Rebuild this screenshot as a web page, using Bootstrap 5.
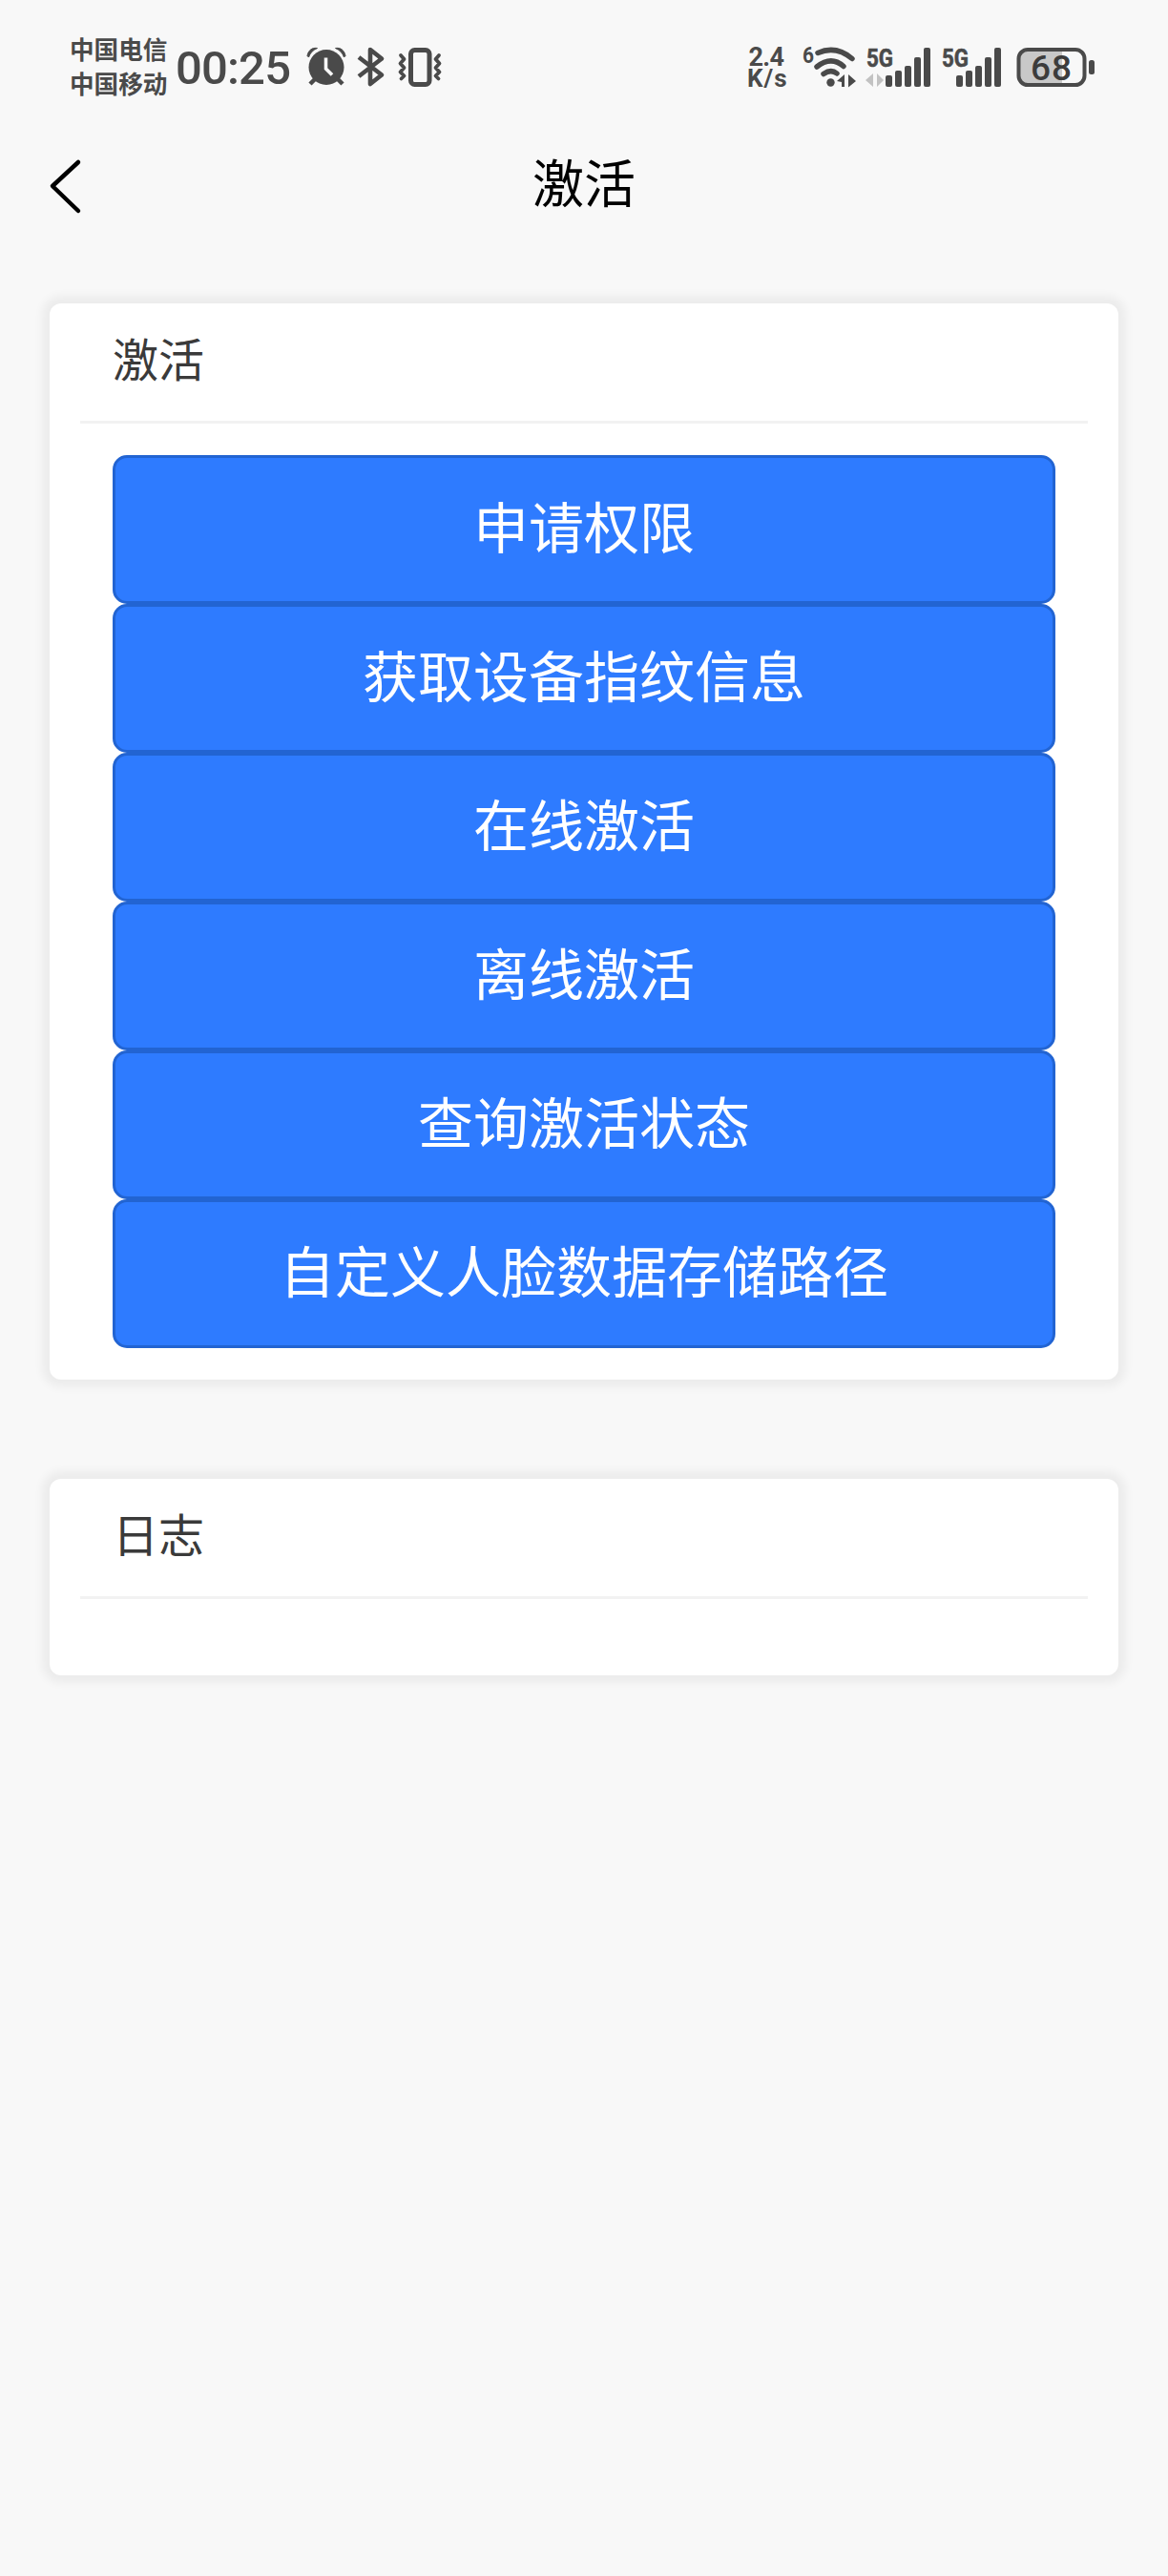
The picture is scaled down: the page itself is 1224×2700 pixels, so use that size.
<!DOCTYPE html>
<html lang="zh-CN">
<head>
<meta charset="utf-8">
<meta name="viewport" content="width=device-width, initial-scale=1">
<title>激活</title>
<link href="https://cdn.jsdelivr.net/npm/bootstrap@5.3.0/dist/css/bootstrap.min.css" rel="stylesheet">
<style>
  body { background: #f8f8f8; font-family: "Noto Sans CJK SC", sans-serif; min-height: 2700px; color: #333; }
  .status-bar { height: 140px; padding: 0 77px 0 73px; color: #4a4a4a; }
  .status-bar svg { height: 44px; flex: none; overflow: visible; }
  .carriers { width: 102px; font-size: 25.6px; line-height: 36px; font-weight: 700; white-space: nowrap; padding-bottom: 2px; }
  .clock { width: 120px; margin-left: 10px; }
  .ic-alarm { width: 40px; margin-left: 17px; }
  .ic-bt { width: 28px; margin-left: 13px; }
  .ic-vib { width: 46px; margin-left: 14px; }
  .ic-speed { width: 42px; }
  .ic-wifi { width: 56px; margin-left: 16px; }
  .ic-sig1 { width: 68px; margin-left: 10px; }
  .ic-sig2 { width: 62px; margin-left: 12px; }
  .ic-batt { width: 82px; margin-left: 16px; }
  svg text { font-family: Roboto, sans-serif; font-weight: 700; fill: #4a4a4a; }
  .title-bar { height: 110px; padding: 0 50px; color: #000; }
  .title-bar h1 { font-size: 54px; line-height: 100px; height: 110px; font-weight: 400; }
  .side-slot { width: 60px; }
  .content-area { padding: 68px 52px 0; }
  .panel { border: 0; border-radius: 12px; background: #fff; box-shadow: 0 0 10px 8px rgba(0,0,0,.05); }
  .panel + .panel { margin-top: 104px; }
  .panel-title { margin: 0 32px; padding: 0 34px; height: 126px; border-bottom: 3px solid #f2f2f2; font-size: 48px; line-height: 113px; font-weight: 400; color: #3a3a3a; }
  .actions { padding: 33px 66px; }
  .btn-action { height: 156px; border: 3px solid #2264d2; border-radius: 15px; background: #2e7bff; color: #fff; font-size: 58px; line-height: 140px; padding: 0 0 10px; }
  .btn-action:hover { background: #2264d2; color: #fff; }
  .log-body { height: 80px; }
</style>
</head>
<body>
<header>
  <div class="status-bar d-flex align-items-center">
    <div class="carriers"><div>中国电信</div><div>中国移动</div></div>
    <svg class="clock" viewBox="0 0 120 44"><text x="-1" y="40" font-size="49" style="font-weight:500" textLength="121" lengthAdjust="spacing">00:25</text></svg>
    <svg class="ic-alarm" viewBox="0 0 40 44" fill="none" stroke="#4a4a4a">
      <circle cx="20" cy="22.500" r="18.500" fill="#4a4a4a" stroke="none"/>
      <path d="M8 35l-5 5M32 35l5 5" stroke-width="4.500"/>
      <path d="M0 10.500C1 5 5 1.500 10.500 2.500Q3.500 5.500 1.500 12ZM40 10.500C39 5 35 1.500 29.500 2.500Q36.500 5.500 38.500 12Z" fill="#4a4a4a" stroke-width="1"/>
      <path d="M19.500 12.500v11.500l6.500 6.500" stroke="#f8f8f8" stroke-width="3.600"/>
    </svg>
    <svg class="ic-bt" viewBox="0 0 28 44" fill="none" stroke="#4a4a4a" stroke-width="4.600" stroke-linejoin="round">
      <path d="M1 12l24 18.500L13 40V4l12 9.500L1 32"/>
    </svg>
    <svg class="ic-vib" viewBox="0 0 46 44" fill="none" stroke="#4a4a4a" stroke-linejoin="round" stroke-linecap="round">
      <rect x="13.500" y="4.500" width="19.500" height="36" rx="4" stroke-width="5"/>
      <path d="M3 10l3.500 4-4 4.500 4 4.500-4 4.500 4 4-3 3M43 10l-3.500 4 4 4.500-4 4.500 4 4.500-4 4 3 3" stroke-width="3.800"/>
    </svg>
    <svg class="ic-speed ms-auto" viewBox="0 0 42 44">
      <text x="1.500" y="20.500" font-size="27" textLength="37.500" lengthAdjust="spacing">2.4</text>
      <text x="0" y="42.500" font-size="26" textLength="41.500" lengthAdjust="spacing">K/s</text>
    </svg>
    <svg class="ic-wifi" viewBox="0 0 56 44">
      <text x="0" y="18" font-size="24" textLength="12" lengthAdjust="spacingAndGlyphs">6</text>
      <g fill="none" stroke="#4a4a4a" stroke-width="5.500" stroke-linecap="round">
        <path d="M16 7.500Q35-1 52 13.500"/><path d="M15 22Q30 10 43 21.500"/><path d="M22 29.500Q30 24 36 29"/>
      </g>
      <circle cx="29.500" cy="38.500" r="4.200" fill="#4a4a4a"/>
      <path d="M36 37l8-7v13h-3v-5zM48 30l8 7-8 6.500z" fill="#4a4a4a"/>
    </svg>
    <svg class="ic-sig1" viewBox="0 0 68 44">
      <text x="1" y="21.500" font-size="26" stroke="#4a4a4a" stroke-width=".6" textLength="28" lengthAdjust="spacingAndGlyphs">5G</text>
      <path d="M0 36l8-7v14zM19 36l-7-7v14z" fill="#c2c2c2"/>
      <g fill="#4a4a4a"><rect x="21" y="31" width="7" height="12" rx="2"/><rect x="31" y="26" width="7" height="17" rx="2"/><rect x="41" y="21" width="7" height="22" rx="2"/><rect x="51" y="12" width="7" height="31" rx="2"/><rect x="61" y="2" width="7" height="41" rx="2"/></g>
    </svg>
    <svg class="ic-sig2" viewBox="0 0 62 44">
      <text x="0" y="21.500" font-size="26" stroke="#4a4a4a" stroke-width=".6" textLength="28" lengthAdjust="spacingAndGlyphs">5G</text>
      <g fill="#4a4a4a"><rect x="15" y="31" width="7" height="12" rx="2"/><rect x="25" y="26" width="7" height="17" rx="2"/><rect x="35" y="21" width="7" height="22" rx="2"/><rect x="45" y="12" width="7" height="31" rx="2"/><rect x="55" y="2" width="7" height="41" rx="2"/></g>
    </svg>
    <svg class="ic-batt" viewBox="0 0 82 44">
      <path d="M48 4H12a9 9 0 0 0-9 9v18a9 9 0 0 0 9 9h36z" fill="#c8c8c8"/>
      <rect x="2.500" y="4" width="69" height="37" rx="9.500" fill="none" stroke="#4a4a4a" stroke-width="4"/>
      <rect x="76" y="15" width="6" height="15" rx="2.500" fill="#4a4a4a"/>
      <text x="15" y="35.500" font-size="37" style="font-weight:500;fill:#3c3c3c" textLength="43" lengthAdjust="spacing">68</text>
    </svg>
  </div>
  <nav class="title-bar d-flex align-items-center justify-content-between">
    <div class="side-slot d-flex">
      <svg width="60" height="60" viewBox="0 0 60 60" fill="none" stroke="#000" stroke-width="4.500" stroke-linecap="round" stroke-linejoin="round" role="img" aria-label="返回"><path d="M32 5L5 30l27 26"/></svg>
    </div>
    <h1 class="mb-0">激活</h1>
    <div class="side-slot"></div>
  </nav>
</header>
<main class="content-area">
  <section class="card panel">
    <h2 class="panel-title">激活</h2>
    <div class="actions d-grid">
      <button type="button" class="btn btn-action">申请权限</button>
      <button type="button" class="btn btn-action">获取设备指纹信息</button>
      <button type="button" class="btn btn-action">在线激活</button>
      <button type="button" class="btn btn-action">离线激活</button>
      <button type="button" class="btn btn-action">查询激活状态</button>
      <button type="button" class="btn btn-action">自定义人脸数据存储路径</button>
    </div>
  </section>
  <section class="card panel">
    <h2 class="panel-title">日志</h2>
    <div class="log-body"></div>
  </section>
</main>
<script src="https://cdn.jsdelivr.net/npm/bootstrap@5.3.0/dist/js/bootstrap.bundle.min.js"></script>
</body>
</html>
